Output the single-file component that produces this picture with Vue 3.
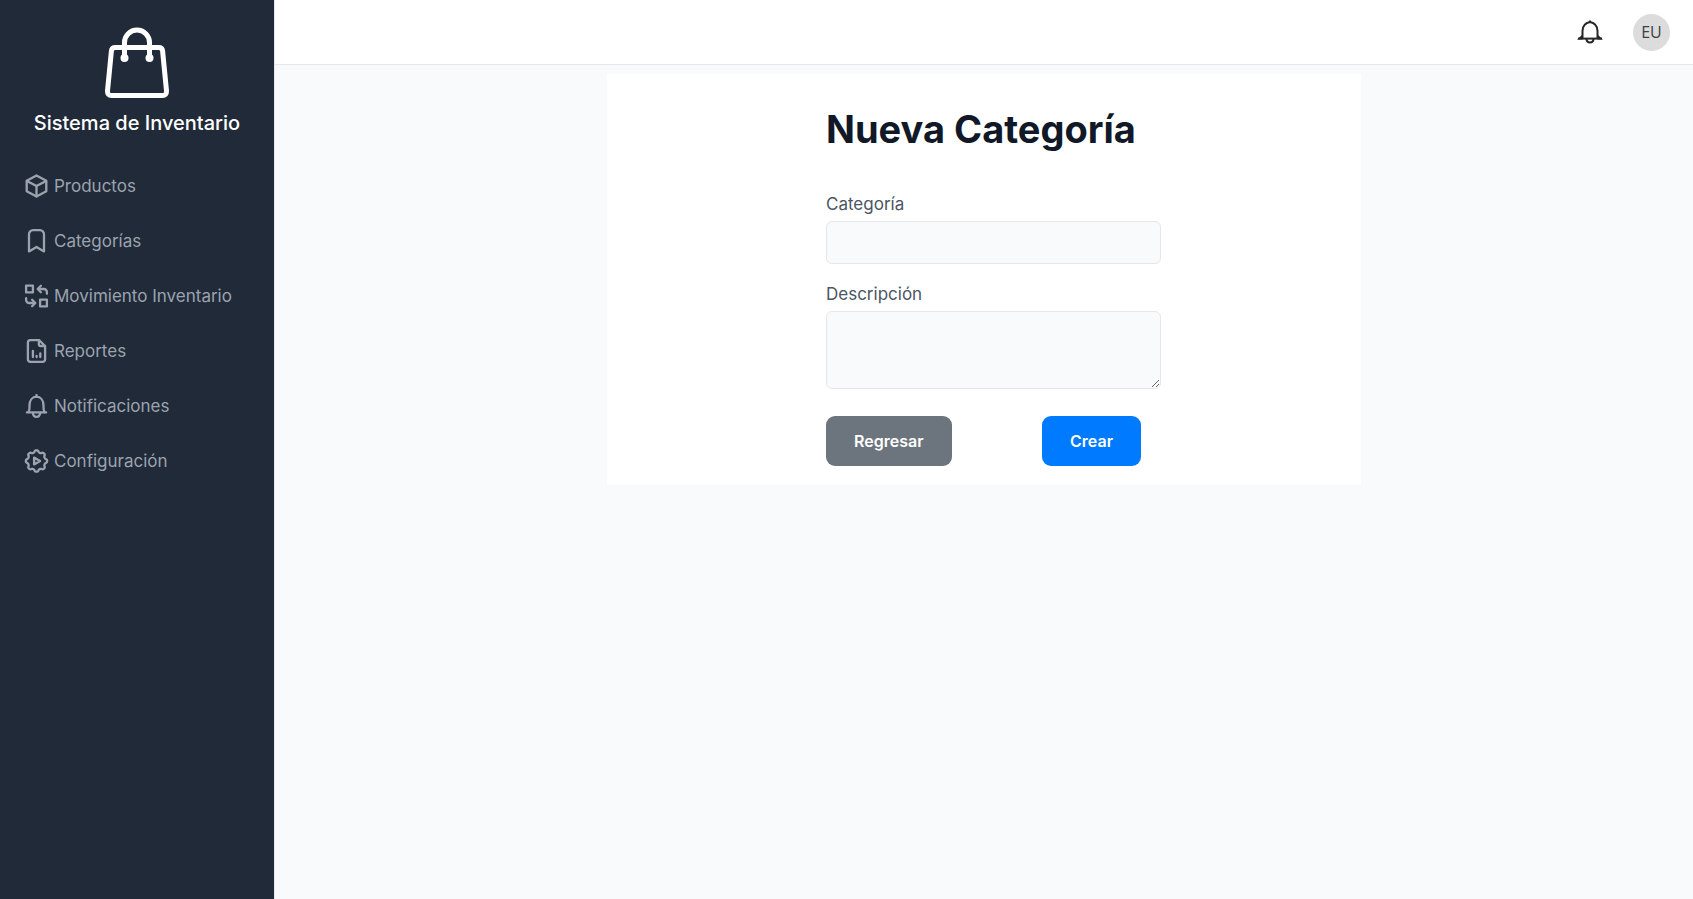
<script setup>
import { ref } from 'vue'

const category = ref('')
const description = ref('')

// Closed outline of an eight-toothed gear centred in a 24-unit box
function gearOutline() {
  const teeth = 8
  const steps = 96
  const points = []
  for (let i = 0; i < steps; i++) {
    const a = (i / steps) * Math.PI * 2
    const r = 9.7 + Math.tanh(1.8 * Math.cos(teeth * a))
    points.push(`${(12 + r * Math.cos(a)).toFixed(2)} ${(12 + r * Math.sin(a)).toFixed(2)}`)
  }
  return `M${points.join('L')}Z`
}

const links = [
  {
    label: 'Productos',
    paths: ['M12 1.4 21.8 6.8V17.2L12 22.6 2.2 17.2V6.8Z', 'M2.4 6.9 12 12l9.6-5.1', 'M12 12v10.4'],
  },
  {
    label: 'Categorías',
    paths: ['M4.500 22.400V5.200A4 4 0 0 1 8.500 1.200h7a4 4 0 0 1 4 4V22.400L12 18Z'],
  },
  {
    label: 'Movimiento Inventario',
    paths: [
      'M1.6 1.6h6.8v6.8H1.6Z',
      'M15.6 15.6h6.8v6.8h-6.8Z',
      'M16.4 1.8 13.2 5l3.2 3.2',
      'M13.6 5h5.8a3 3 0 0 1 3 3v1.8',
      'M7.6 15.800 10.800 19l-3.200 3.200',
      'M10.4 19h-5.800a3 3 0 0 1-3-3v-1.800',
    ],
  },
  {
    label: 'Reportes',
    paths: [
      'M14.6 1.200H5.800a2.400 2.400 0 0 0-2.400 2.400v16.800a2.400 2.400 0 0 0 2.400 2.400h12.400a2.400 2.400 0 0 0 2.400-2.400V7Z',
      'M14.4 1.600v3.800a1.600 1.600 0 0 0 1.600 1.600h4.200',
      'M8.4 12v6',
      'M12.1 17v1',
      'M15.8 14.5v3.500',
    ],
  },
  {
    label: 'Notificaciones',
    paths: [
      'M12 1v1.600',
      'M2.400 18.400h19.200',
      'M3.800 18.200C5.400 16.400 5 13.600 5 11.400 5 6.200 8 2.800 12 2.600c4 .2 7 3.600 7 8.800 0 2.200-.4 5 1.200 6.800',
      'M8.400 18.800c.2 2.600 1.600 4 3.600 4s3.400-1.400 3.600-4',
    ],
  },
  {
    label: 'Configuración',
    paths: [gearOutline(), 'M9.600 8.600v6.800l6-3.400Z'],
  },
]
</script>

<template>
  <div class="layout">
    <aside class="sidebar">
      <div class="brand">
        <svg class="brand-icon" viewBox="0 0 66 72" fill="none" stroke="#fff" stroke-width="5" aria-hidden="true">
          <path d="M11.5 20.500H54.500Q58.300 20.500 58.600 24L62.500 64Q62.600 68.500 58.500 68.500H7.500Q3.400 68.500 3.500 64L7.400 24Q7.700 20.500 11.500 20.500Z" />
          <path d="M20.500 31V15.500a12.500 12.500 0 0 1 25 0V31" />
          <circle cx="20.500" cy="31" r="4" fill="#fff" stroke="none" />
          <circle cx="45.500" cy="31" r="4" fill="#fff" stroke="none" />
        </svg>
        <span class="brand-name">Sistema de Inventario</span>
      </div>
      <nav class="nav">
        <a v-for="link in links" :key="link.label" href="#" class="nav-link">
          <svg class="nav-icon" viewBox="0 0 24 24" fill="none" stroke="currentColor" stroke-width="2.3" stroke-linejoin="round" stroke-linecap="round" aria-hidden="true">
            <path v-for="d in link.paths" :key="d" :d="d" />
          </svg>
          <span>{{ link.label }}</span>
        </a>
      </nav>
    </aside>

    <div class="content">
      <header class="topbar">
        <button type="button" class="bell" aria-label="Notificaciones">
          <svg viewBox="0 0 26 24" fill="none" stroke="#262626" stroke-width="2" stroke-linejoin="round" aria-hidden="true">
            <path d="M5.500 18V11C5.500 6.500 8.500 3 13 2c4.500 1 7.500 4.500 7.500 9V18" />
            <path d="M13 .500v2" />
            <path d="M0 19.500 5.500 14.500v5Zm26 0L20.500 14.500v5Z" fill="#262626" stroke="none" />
            <path d="M1 18.600h24" />
            <path d="M9.500 18.500c0 2.600 1.500 4 3.500 4s3.500-1.400 3.500-4" />
          </svg>
        </button>
        <button type="button" class="avatar">EU</button>
      </header>

      <main class="card">
        <form class="form" @submit.prevent>
          <h1 class="title">Nueva Categoría</h1>
          <label class="label" for="category">Categoría</label>
          <input id="category" v-model="category" class="field" type="text" />
          <label class="label" for="description">Descripción</label>
          <textarea id="description" v-model="description" class="field area"></textarea>
          <div class="actions">
            <button type="button" class="btn back">Regresar</button>
            <button type="submit" class="btn create">Crear</button>
          </div>
        </form>
      </main>
    </div>
  </div>
</template>

<style>
body {
  background: #f8fafc;
}
</style>

<style scoped>
.layout {
  display: flex;
  min-height: 100vh;
  font-family: Inter, 'Open Sans', sans-serif;
  font-size: 16px;
  line-height: 24px;
}

.layout * {
  box-sizing: border-box;
}

.sidebar {
  flex: 0 0 275px;
  background: #202a38;
  border-right: 1px solid #e5e7eb;
}

.brand {
  display: flex;
  flex-direction: column;
  align-items: center;
  gap: 12px;
  padding: 27px 0 20px;
}

.brand-icon {
  width: 66px;
  height: 72px;
}

.brand-name {
  color: #fff;
  font-size: 20px;
  font-weight: 500;
  line-height: 24px;
  white-space: nowrap;
}

.nav {
  display: flex;
  flex-direction: column;
  padding: 3px 24px;
}

.nav-link {
  display: flex;
  align-items: center;
  gap: 5px;
  height: 55px;
  color: #9ca3af;
  font-size: 17px;
  text-decoration: none;
  white-space: nowrap;
}

.nav-icon {
  flex: none;
  width: 25px;
  height: 24px;
}

.content {
  flex: 1;
  min-width: 0;
}

.topbar {
  display: flex;
  align-items: center;
  justify-content: flex-end;
  gap: 30px;
  height: 65px;
  padding-right: 23px;
  background: #fff;
  border-bottom: 1px solid #e5e7eb;
}

.bell {
  width: 26px;
  height: 24px;
  padding: 0;
  background: none;
  border: 0;
}

.bell svg {
  display: block;
  width: 26px;
  height: 24px;
}

.avatar {
  width: 37px;
  height: 37px;
  padding: 0;
  color: #404040;
  background: #dcdcdc;
  border: 0;
  border-radius: 50%;
  font-family: 'Open Sans', sans-serif;
  font-size: 16px;
}

.card {
  max-width: 754px;
  margin: 9px auto 0;
  padding: 31px 200px 19px 219px;
  background: #fff;
}

.title {
  margin: 0 0 39px;
  color: #111827;
  font-size: 38px;
  font-weight: 700;
  line-height: 48px;
  white-space: nowrap;
}

.label {
  display: block;
  margin-bottom: 5px;
  color: #4b5563;
  font-size: 17px;
}

.field {
  display: block;
  width: 100%;
  height: 43px;
  margin-bottom: 18px;
  padding: 8px 12px;
  background: #f8fafc;
  border: 1px solid #e5e7eb;
  border-radius: 6px;
  font: inherit;
}

.area {
  height: 78px;
  margin-bottom: 27px;
  resize: both;
}

.actions {
  display: flex;
  justify-content: space-between;
  padding-right: 20px;
}

.btn {
  height: 50px;
  padding: 0 28px;
  color: #fff;
  border: 0;
  border-radius: 9px;
  font-family: inherit;
  font-size: 16px;
  font-weight: 600;
}

.back {
  background: #6c757d;
}

.create {
  background: #007bff;
}
</style>
